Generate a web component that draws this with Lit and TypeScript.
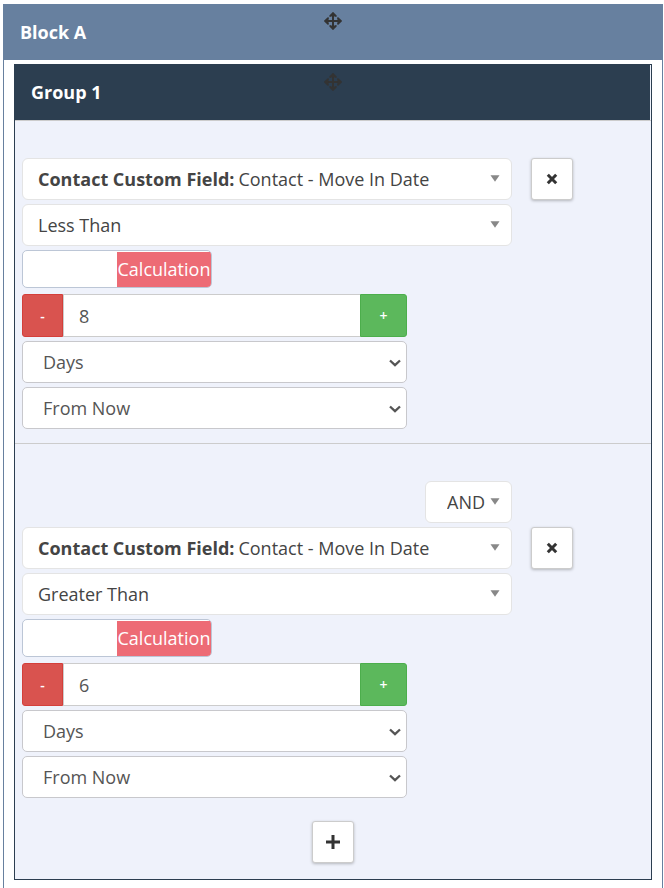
import { LitElement, html, css, svg } from "lit";
import { customElement, property, state } from "lit/decorators.js";

const moveIcon = html`<svg class="move" viewBox="0 0 18 18" aria-hidden="true">
  <g fill="none" stroke="currentColor" stroke-width="2" stroke-linecap="round" stroke-linejoin="round">
    <path d="M9 1.5V16.5M1.5 9H16.5" />
    <path fill="currentColor" stroke-width="1.8" d="M6.2 4L9 1.2L11.8 4L9 3.2ZM6.2 14L9 16.8L11.8 14L9 14.8ZM4 6.2L1.2 9L4 11.8L3.2 9ZM14 6.2L16.8 9L14 11.8L14.8 9Z" />
  </g>
</svg>`;

const iconShape = {
  close: svg`<path d="M2.8 2.8L11.2 11.2M11.2 2.8L2.8 11.2" />`,
  plus: svg`<path d="M7 0V14M0 7H14" />`,
};

const icon = (name: keyof typeof iconShape) =>
  html`<svg class="icon" viewBox="0 0 14 14" aria-hidden="true">${iconShape[name]}</svg>`;

const caret = html`<svg class="caret" viewBox="0 0 10 7" aria-hidden="true"><path d="M0.5 0.2H9.5L5 6.8Z" /></svg>`;

const chevron = html`<svg class="chevron" viewBox="0 0 12 8" aria-hidden="true"><path d="M1 1.5L6 6.2L11 1.5" /></svg>`;

const controls = css`
  :host {
    display: block;
  }
  * {
    box-sizing: border-box;
  }
  button,
  input,
  select {
    font: inherit;
    color: inherit;
    margin: 0;
  }
  .square {
    flex: none;
    display: flex;
    align-items: center;
    justify-content: center;
    width: 42px;
    height: 42px;
    padding: 0;
    border: 1px solid #ccc;
    border-radius: 3px;
    background: #fff;
    box-shadow: 0 1px 3px rgba(0, 0, 0, 0.25);
    color: #333;
    cursor: pointer;
  }
  .icon {
    width: 14px;
    height: 14px;
    fill: none;
    stroke: currentColor;
    stroke-width: 3;
  }
`;

@customElement("filter-condition")
export class FilterCondition extends LitElement {
  @property() operator = "Less Than";
  @property({ type: Number }) amount = 0;
  @property() join = "";

  static styles = [
    controls,
    css`
      .condition {
        display: flex;
        align-items: flex-start;
        gap: 19px;
        padding: 37px 78px 14px 7px;
      }
      .fields {
        flex: 1;
        min-width: 0;
        display: flex;
        flex-direction: column;
        gap: 4px;
      }
      .joined .square {
        margin-top: 46px;
      }
      .picker {
        position: relative;
        display: flex;
        align-items: center;
        gap: 4px;
        height: 42px;
        padding-left: 15px;
        border: 1px solid #e4e4e4;
        border-radius: 6px;
        background: #fff;
        color: #444;
      }
      .picker label {
        flex: none;
        font-weight: 700;
      }
      .picker.join {
        align-self: flex-end;
        width: 87px;
        padding-left: 21px;
      }
      select {
        appearance: none;
        flex: 1;
        min-width: 0;
        width: 100%;
        height: 100%;
        padding: 0;
        border: 0;
        background: transparent;
      }
      .caret {
        position: absolute;
        right: 11px;
        top: 16px;
        width: 10px;
        height: 7px;
        fill: #888;
        pointer-events: none;
      }
      .switch {
        display: flex;
        width: 190px;
        height: 38px;
        margin-bottom: 2px;
        border: 1px solid #bcc6d6;
        border-radius: 5px;
        background: #fff;
        overflow: hidden;
      }
      .switch input {
        appearance: none;
        flex: 1;
      }
      .switch label {
        flex: 1;
        margin-top: 1px;
        line-height: 34px;
        text-align: center;
        background: #ed6b75;
        color: #fff;
      }
      .stepper,
      .drop {
        width: 100%;
        max-width: 385px;
      }
      .stepper {
        display: flex;
        height: 43px;
      }
      .stepper button {
        padding: 0;
        font-size: 14px;
        font-weight: 600;
        color: #fff;
      }
      .minus {
        width: 41px;
        border: 1px solid #d43f3a;
        border-radius: 3px 0 0 3px;
        background: #d9534f;
      }
      .plus {
        width: 47px;
        border: 1px solid #4cae4c;
        border-radius: 0 3px 3px 0;
        background: #5cb85c;
      }
      .stepper input {
        flex: 1;
        min-width: 0;
        padding: 0 15px;
        border: 1px solid #ccc;
        border-right: 0;
        border-radius: 0;
        background: #fff;
        color: #555;
      }
      .drop {
        position: relative;
        height: 42px;
        border: 1px solid #c8c8cc;
        border-radius: 5px;
        background: #fff;
        color: #555;
      }
      .drop select {
        padding-left: 20px;
      }
      .chevron {
        position: absolute;
        right: 5px;
        top: 17px;
        width: 12px;
        height: 8px;
        fill: none;
        stroke: #555;
        stroke-width: 2.3;
        pointer-events: none;
      }
    `,
  ];

  private step(by: number) {
    this.amount += by;
  }

  render() {
    return html`<div class="condition ${this.join ? "joined" : ""}">
      <div class="fields">
        ${this.join
          ? html`<div class="picker join">
              <select aria-label="Join"><option>${this.join}</option></select>${caret}
            </div>`
          : ""}
        <div class="picker">
          <label for="field">Contact Custom Field:</label>
          <select id="field"><option>Contact - Move In Date</option></select>${caret}
        </div>
        <div class="picker">
          <select aria-label="Operator"><option>${this.operator}</option></select>${caret}
        </div>
        <div class="switch">
          <input id="mode" type="checkbox" />
          <label for="mode">Calculation</label>
        </div>
        <div class="stepper">
          <button class="minus" type="button" aria-label="Decrease" @click=${() => this.step(-1)}>-</button>
          <input type="text" inputmode="numeric" aria-label="Amount" .value=${String(this.amount)} />
          <button class="plus" type="button" aria-label="Increase" @click=${() => this.step(1)}>+</button>
        </div>
        <div class="drop">
          <select aria-label="Unit"><option>Days</option></select>${chevron}
        </div>
        <div class="drop">
          <select aria-label="Direction"><option>From Now</option></select>${chevron}
        </div>
      </div>
      <button class="square" type="button" aria-label="Remove condition">${icon("close")}</button>
    </div>`;
  }
}

@customElement("app-root")
export class AppRoot extends LitElement {
  @state() private conditions = [
    { operator: "Less Than", amount: 8, join: "" },
    { operator: "Greater Than", amount: 6, join: "AND" },
  ];

  static styles = [
    controls,
    css`
      :host {
        display: flex;
        flex-direction: column;
        box-sizing: border-box;
        min-height: 100vh;
        padding: 4px 1px 0 3px;
        background: #fff;
        font: 18px/26px "Open Sans", sans-serif;
      }
      .block {
        flex: 1;
        border: 1px solid #67809f;
        border-width: 0 1px;
      }
      .group {
        margin: 4px 10px 8px;
        border: 1px solid #2c3e50;
        background: #eff2fb;
      }
      .bar {
        position: relative;
        padding: 15px 16px;
      }
      .block-bar {
        background: #67809f;
      }
      .group-bar {
        margin-right: 1px;
        padding-top: 14px;
        background: #2c3e50;
      }
      .title {
        margin: 0;
        font-size: 18px;
        line-height: 26px;
        font-weight: 700;
        color: #fff;
      }
      .move {
        position: absolute;
        top: 8px;
        left: calc(50% - 9px);
        width: 18px;
        height: 18px;
        color: #333;
      }
      filter-condition {
        border-top: 1px solid #ccc;
      }
      .footer {
        display: flex;
        justify-content: center;
        padding: 9px 0 16px;
      }
    `,
  ];

  render() {
    return html`<section class="block">
      <header class="bar block-bar"><h2 class="title">Block A</h2>${moveIcon}</header>
      <section class="group">
        <header class="bar group-bar"><h3 class="title">Group 1</h3>${moveIcon}</header>
        ${this.conditions.map(
          (c) => html`<filter-condition .operator=${c.operator} .amount=${c.amount} .join=${c.join}></filter-condition>`
        )}
        <div class="footer">
          <button class="square" type="button" aria-label="Add condition">${icon("plus")}</button>
        </div>
      </section>
    </section>`;
  }
}
